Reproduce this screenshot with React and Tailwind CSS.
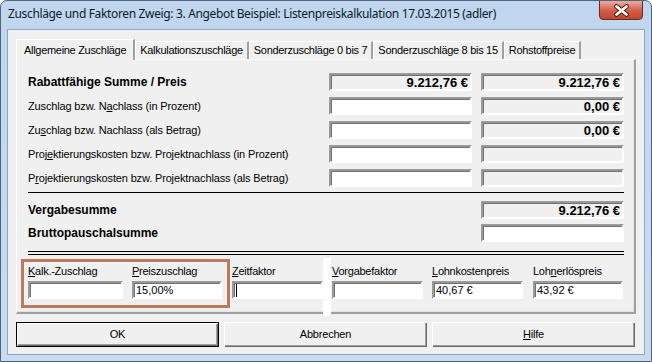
import React from "react";

const sunken =
  "h-[18px] border-2 border-t-[#9a9a9a] border-l-[#9a9a9a] border-r-[#ffffff] border-b-[#ffffff] shadow-[inset_1px_1px_0_#707070] flex items-center justify-end pr-[2px] text-[13px] font-bold leading-none tracking-normal";

function Field({ value, white, className = "" }) {
  return (
    <div className={`${sunken} ${white ? "bg-white" : "bg-[#f0f0f0]"} ${className}`}>
      {value}
    </div>
  );
}

function Row({ label, bold, a, b, c, d }) {
  return (
    <div className="flex items-center h-[18px]">
      <div
        className={`flex-1 leading-[18px] text-black ${
          bold ? "font-bold text-[12px] tracking-normal" : "text-[11px] tracking-[-0.15px]"
        }`}
      >
        {label}
      </div>
      <div className="flex gap-[9px]">
        {a === null ? <div className="w-[143px]" /> : <Field white={a} value={c} className="w-[143px]" />}
        <Field white={b} value={d} className="w-[143px]" />
      </div>
    </div>
  );
}

function Tab({ children, selected }) {
  if (selected) {
    return (
      <div className="relative z-10 h-[21px] px-[7px] flex items-center bg-[#f0f0f0] border-t border-l border-white border-r-2 border-r-[#a0a0a0] -mb-[1px] text-[11px] tracking-[-0.3px]">
        {children}
      </div>
    );
  }
  return (
    <div className="h-[18px] mt-[2px] pl-[4px] pr-[4px] flex items-center bg-[#f0f0f0] border-t border-l border-white border-r-2 border-r-[#a0a0a0] text-[11px] tracking-[-0.3px]">
      {children}
    </div>
  );
}

function BottomField({ label, width, colWidth, value, cursor }) {
  return (
    <div className="flex flex-col" style={{ width: colWidth }}>
      <div className="text-[11px] leading-[13px] h-[13px] mb-[3px] tracking-[-0.25px]">{label}</div>
      <div
        className="h-[18px] bg-white border-2 border-t-[#9a9a9a] border-l-[#9a9a9a] border-r-[#ffffff] border-b-[#ffffff] shadow-[inset_1px_1px_0_#707070] flex items-center pl-[2px] text-[11px] leading-none"
        style={{ width }}
      >
        {cursor ? <div className="w-[1px] h-[13px] bg-black" /> : value}
      </div>
    </div>
  );
}

function Button({ children, def }) {
  return (
    <div
      className={`w-[203px] h-[25px] flex items-center justify-center text-[11px] tracking-[-0.2px] bg-[#f0f0f0] ${
        def
          ? "border border-black shadow-[inset_1px_1px_0_#ffffff,inset_-1px_-1px_0_#696969,inset_-2px_-2px_0_#a0a0a0]"
          : "shadow-[inset_1px_1px_0_#ffffff,inset_-1px_-1px_0_#696969,inset_-2px_-2px_0_#a0a0a0]"
      }`}
    >
      {children}
    </div>
  );
}

export default function App() {
  return (
    <div className="w-[652px] h-[362px] relative flex flex-col bg-gradient-to-b from-[#c0d6ee] to-[#c8dcf1] border border-[#4f6478] rounded-t-[7px] overflow-hidden font-['Liberation_Sans',sans-serif] text-black">
      {/* Title bar */}
      <div className="h-[28px] flex items-center pl-[7px] pb-[2px] text-[12px] tracking-[-0.35px] font-['Noto_Sans',sans-serif] text-[#0b1a2c]">
        Zuschläge und Faktoren Zweig: 3. Angebot Beispiel: Listenpreiskalkulation 17.03.2015 (adler)
      </div>
      <div className="absolute top-[-1px] right-[8px] w-[44px] h-[20px] rounded-b-[4px] border border-[#6b2a22] bg-gradient-to-b from-[#e9aea3] via-[#d3604f] to-[#c2452f] flex items-center justify-center">
        <svg width="17" height="13" viewBox="0 0 17 13">
          <path d="M3.5 2.5 L13.5 10.5 M13.5 2.5 L3.5 10.5" stroke="#4a1a14" strokeWidth="4.6" strokeLinecap="round" />
          <path d="M3.5 2.5 L13.5 10.5 M13.5 2.5 L3.5 10.5" stroke="#ffffff" strokeWidth="2.8" strokeLinecap="round" />
        </svg>
      </div>

      {/* Client */}
      <div className="mx-[6px] h-[326px] bg-[#f0f0f0] border border-[#8fa6bf] pt-[9px] pl-[8px] pr-[8px] flex flex-col">
        {/* Tabs */}
        <div className="flex items-start h-[20px]">
          <Tab selected>Allgemeine Zuschläge</Tab>
          <Tab>Kalkulationszuschläge</Tab>
          <Tab>Sonderzuschläge 0 bis 7</Tab>
          <Tab>Sonderzuschläge 8 bis 15</Tab>
          <Tab>Rohstoffpreise</Tab>
        </div>
        {/* Panel */}
        <div className="relative w-[620px] h-[255px] border-t border-l border-white border-r-2 border-b-2 border-r-[#a0a0a0] border-b-[#a0a0a0] shadow-[inset_-1px_-1px_0_#e3e3e3] pl-[11px] pr-[10px] pt-[13px] flex flex-col">
          <div className="flex flex-col gap-[6px]">
            <Row label="Rabattfähige Summe / Preis" bold a={false} b={false} c="9.212,76 €" d="9.212,76 €" />
            <Row label={<>Zuschlag bzw. N<u>a</u>chlass (in Prozent)</>} a={true} b={false} d="0,00 €" />
            <Row label={<>Zu<u>s</u>chlag bzw. Nachlass (als Betrag)</>} a={true} b={false} d="0,00 €" />
            <Row label={<>Proj<u>e</u>ktierungskosten bzw. Projektnachlass (in Prozent)</>} a={true} b={false} />
            <Row label={<>P<u>r</u>ojektierungskosten bzw. Projektnachlass (als Betrag)</>} a={true} b={false} />
          </div>
          <div className="h-[1px] bg-black mt-[5px]" />
          <div className="flex flex-col gap-[5px] mt-[8px]">
            <Row label="Vergabesumme" bold a={null} b={false} d="9.212,76 €" />
            <Row label="Bruttopauschalsumme" bold a={null} b={true} />
          </div>
          <div className="h-[1px] bg-black mt-[9px]" />
          <div className="h-[1px] bg-black mt-[2px]" />
          <div className="flex mt-[10px]">
            <BottomField colWidth="104px" width="95px" label={<><u>K</u>alk.-Zuschlag</>} />
            <BottomField colWidth="100px" width="90px" label={<><u>P</u>reiszuschlag</>} value="15,00%" />
            <BottomField colWidth="100px" width="91px" label={<><u>Z</u>eitfaktor</>} cursor />
            <BottomField colWidth="100px" width="91px" label={<><u>V</u>orgabefaktor</>} />
            <BottomField colWidth="101px" width="91px" label={<><u>L</u>ohnkostenpreis</>} value="40,67 €" />
            <BottomField colWidth="91px" width="90px" label={<>Loh<u>n</u>erlöspreis</>} value="43,92 €" />
          </div>
          {/* highlight annotation */}
          <div className="absolute left-[4px] top-[199px] w-[209px] h-[49px] border-[3px] border-[#b97b5c] pointer-events-none" />
          <div className="absolute left-[306px] top-[198px] w-[8px] h-[58px] bg-white pointer-events-none" />
        </div>
        {/* Buttons */}
        <div className="flex gap-[5px] mt-[8px]">
          <Button def>OK</Button>
          <Button>Abbrechen</Button>
          <Button>
            <span>
              <u>H</u>ilfe
            </span>
          </Button>
        </div>
      </div>
    </div>
  );
}
